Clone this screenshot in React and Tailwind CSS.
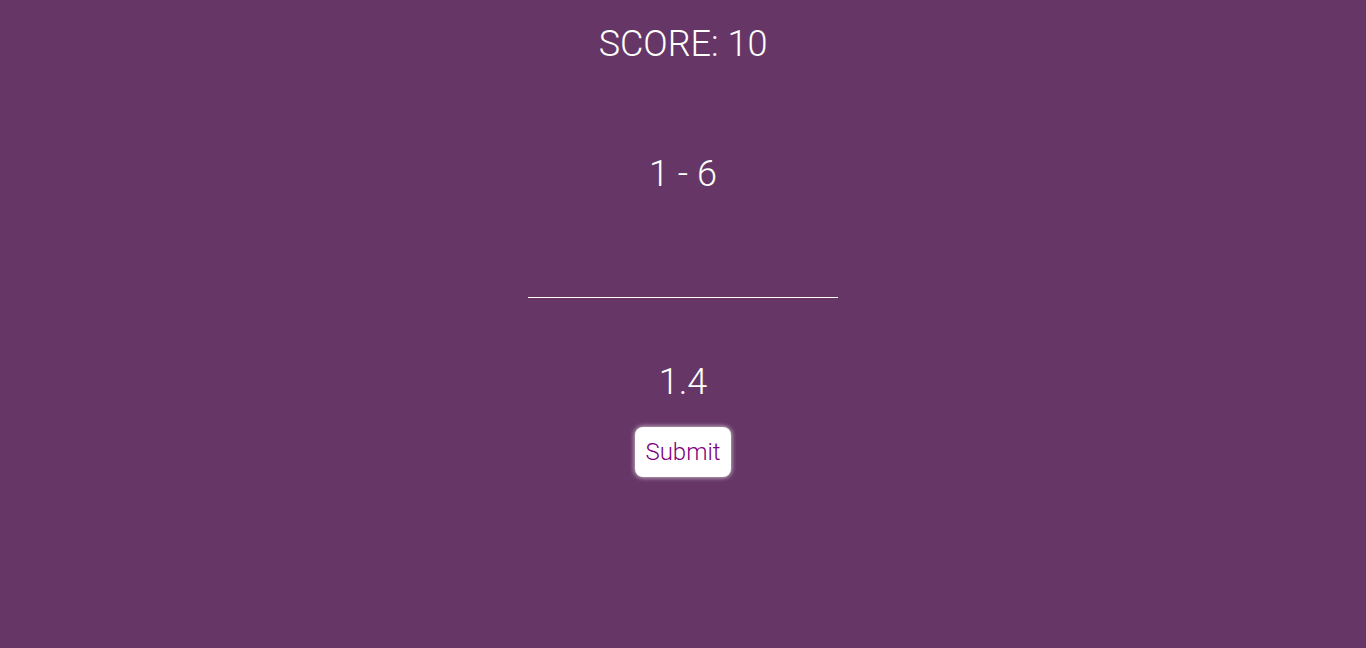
export default function App() {
  return (
    <div className="w-full h-[648px] bg-[#663766] flex flex-col items-center text-white font-light" style={{ fontFamily: "Roboto, 'Liberation Sans', sans-serif" }}>
      <div className="mt-[22px] text-[36px] leading-[44px]">SCORE: 10</div>
      <div className="mt-[86px] text-[36px] leading-[44px]">1 - 6</div>
      <div className="mt-[101px] w-[310px] h-[1px] bg-white"></div>
      <div className="mt-[62px] text-[36px] leading-[44px]">1.4</div>
      <button className="mt-[23px] w-[96px] h-[50px] bg-white rounded-[8px] text-[#800080] text-[24px] leading-none font-light shadow-[0_0_4px_1px_rgba(255,255,255,0.6)]">Submit</button>
    </div>
  );
}
